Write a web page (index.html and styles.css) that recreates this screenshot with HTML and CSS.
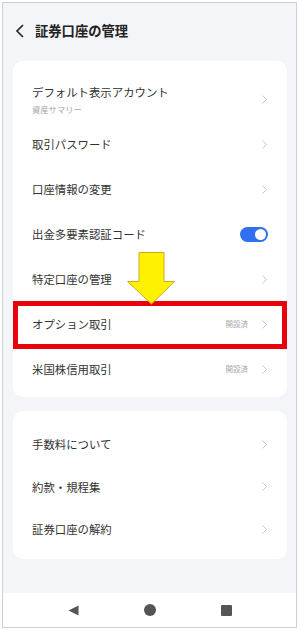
FILE: index.html
```html
<!DOCTYPE html>
<html lang="ja">
<head>
<meta charset="utf-8">
<link rel="stylesheet" href="styles.css">
</head>
<body>
<div class="frame">
  <header class="header">
    <svg class="back" width="10" height="14" viewBox="0 0 10 14"><path d="M8 1 L2 7 L8 13" fill="none" stroke="#222" stroke-width="1.6"/></svg>
    <h1 class="title">証券口座の管理</h1>
  </header>
  <main class="main">
    <section class="card card-a">
      <div class="row">
        <div class="label-group">
          <span class="label">デフォルト表示アカウント</span>
          <span class="sub">資産サマリー</span>
        </div>
        <svg class="chev" width="5" height="9" viewBox="0 0 5 9"><path d="M0.5 0.5 L4.5 4.5 L0.5 8.5" fill="none" stroke="#c6c6ca" stroke-width="1"/></svg>
      </div>
      <div class="row"><span class="label">取引パスワード</span>
        <svg class="chev" width="5" height="9" viewBox="0 0 5 9"><path d="M0.5 0.5 L4.5 4.5 L0.5 8.5" fill="none" stroke="#c6c6ca" stroke-width="1"/></svg></div>
      <div class="row"><span class="label">口座情報の変更</span>
        <svg class="chev" width="5" height="9" viewBox="0 0 5 9"><path d="M0.5 0.5 L4.5 4.5 L0.5 8.5" fill="none" stroke="#c6c6ca" stroke-width="1"/></svg></div>
      <div class="row"><span class="label">出金多要素認証コード</span>
        <span class="toggle"><span class="knob"></span></span></div>
      <div class="row"><span class="label">特定口座の管理</span>
        <svg class="chev" width="5" height="9" viewBox="0 0 5 9"><path d="M0.5 0.5 L4.5 4.5 L0.5 8.5" fill="none" stroke="#c6c6ca" stroke-width="1"/></svg></div>
      <div class="row"><span class="label">オプション取引</span>
        <span class="right"><span class="status">開設済</span>
        <svg class="chev" width="5" height="9" viewBox="0 0 5 9"><path d="M0.5 0.5 L4.5 4.5 L0.5 8.5" fill="none" stroke="#c6c6ca" stroke-width="1"/></svg></span></div>
      <div class="row"><span class="label">米国株信用取引</span>
        <span class="right"><span class="status">開設済</span>
        <svg class="chev" width="5" height="9" viewBox="0 0 5 9"><path d="M0.5 0.5 L4.5 4.5 L0.5 8.5" fill="none" stroke="#c6c6ca" stroke-width="1"/></svg></span></div>
    </section>
    <section class="card card-b">
      <div class="row"><span class="label">手数料について</span>
        <svg class="chev" width="5" height="9" viewBox="0 0 5 9"><path d="M0.5 0.5 L4.5 4.5 L0.5 8.5" fill="none" stroke="#c6c6ca" stroke-width="1"/></svg></div>
      <div class="row"><span class="label">約款・規程集</span>
        <svg class="chev" width="5" height="9" viewBox="0 0 5 9"><path d="M0.5 0.5 L4.5 4.5 L0.5 8.5" fill="none" stroke="#c6c6ca" stroke-width="1"/></svg></div>
      <div class="row"><span class="label">証券口座の解約</span>
        <svg class="chev" width="5" height="9" viewBox="0 0 5 9"><path d="M0.5 0.5 L4.5 4.5 L0.5 8.5" fill="none" stroke="#c6c6ca" stroke-width="1"/></svg></div>
    </section>
  </main>
  <nav class="navbar">
    <svg width="11" height="11" viewBox="0 0 11 11"><polygon points="10.5,0.5 10.5,10.5 0.5,5.5" fill="#555"/></svg>
    <svg width="12" height="12" viewBox="0 0 12 12"><circle cx="6" cy="6" r="6" fill="#555"/></svg>
    <svg width="11" height="11" viewBox="0 0 11 11"><rect x="0" y="0" width="11" height="11" rx="1" fill="#555"/></svg>
  </nav>
  <div class="highlight"></div>
  <svg class="arrow" width="50" height="53" viewBox="0 0 50 53"><polygon points="13,0.5 38,0.5 38,29.5 48.5,29.5 25.5,52 1.5,29.5 13,29.5" fill="#fff200" stroke="#d9a520" stroke-width="1"/></svg>
</div>
</body>
</html>
```

FILE: styles.css
```css
* { box-sizing: border-box; }
html, body { margin: 0; padding: 0; background: #fff; }
body { font-family: "Noto Sans CJK JP", "Noto Sans", sans-serif; color: #333; }

.frame {
  position: relative;
  margin: 2px 0 0 2px;
  width: 295px;
  height: 626px;
  border: 1px solid #cfcfd2;
  background: #f4f5f8;
  display: flex;
  flex-direction: column;
}

.header {
  height: 55px;
  display: flex;
  align-items: center;
  padding-left: 12px;
  gap: 10px;
}
.back { display: block; }
.title {
  margin: 0;
  font-size: 13.3px;
  font-weight: 700;
  color: #222;
  line-height: 1;
}

.main {
  flex: 1;
  padding: 3px 9px 0 10px;
}
.card {
  background: #fff;
  border-radius: 10px;
}
.card-a { padding: 15.5px 0 5.5px; }
.card-b { margin-top: 14px; padding: 11.75px 0 8.75px; }

.row {
  display: flex;
  align-items: center;
  justify-content: space-between;
  padding: 0 20px 0 19px;
}
.card-a .row { height: 45px; }
.card-b .row { height: 42.5px; }

.label {
  font-size: 11.4px;
  color: #333;
  line-height: 16px;
}
.label-group { display: flex; flex-direction: column; }
.sub {
  font-size: 8.3px;
  color: #a5a5a8;
  line-height: 12px;
  margin-top: 3px;
}
.chev { display: block; }
.right { display: flex; align-items: center; gap: 14px; }
.status { font-size: 7.5px; color: #a8a8ab; line-height: 1; }

.toggle {
  position: relative;
  width: 28px;
  height: 15px;
  border-radius: 8px;
  background: #2f6ff0;
  margin-right: -1px;
}
.knob {
  position: absolute;
  right: 2px;
  top: 2px;
  width: 11px;
  height: 11px;
  border-radius: 50%;
  background: #fff;
}

.navbar {
  height: 34px;
  background: #fff;
  display: flex;
  align-items: center;
  justify-content: center;
  gap: 65px;
}
.navbar svg { display: block; }

.highlight {
  position: absolute;
  left: 10px;
  top: 298px;
  width: 274px;
  height: 48px;
  border: 5px solid #e8000b;
}
.arrow {
  position: absolute;
  left: 123px;
  top: 249px;
}
```
